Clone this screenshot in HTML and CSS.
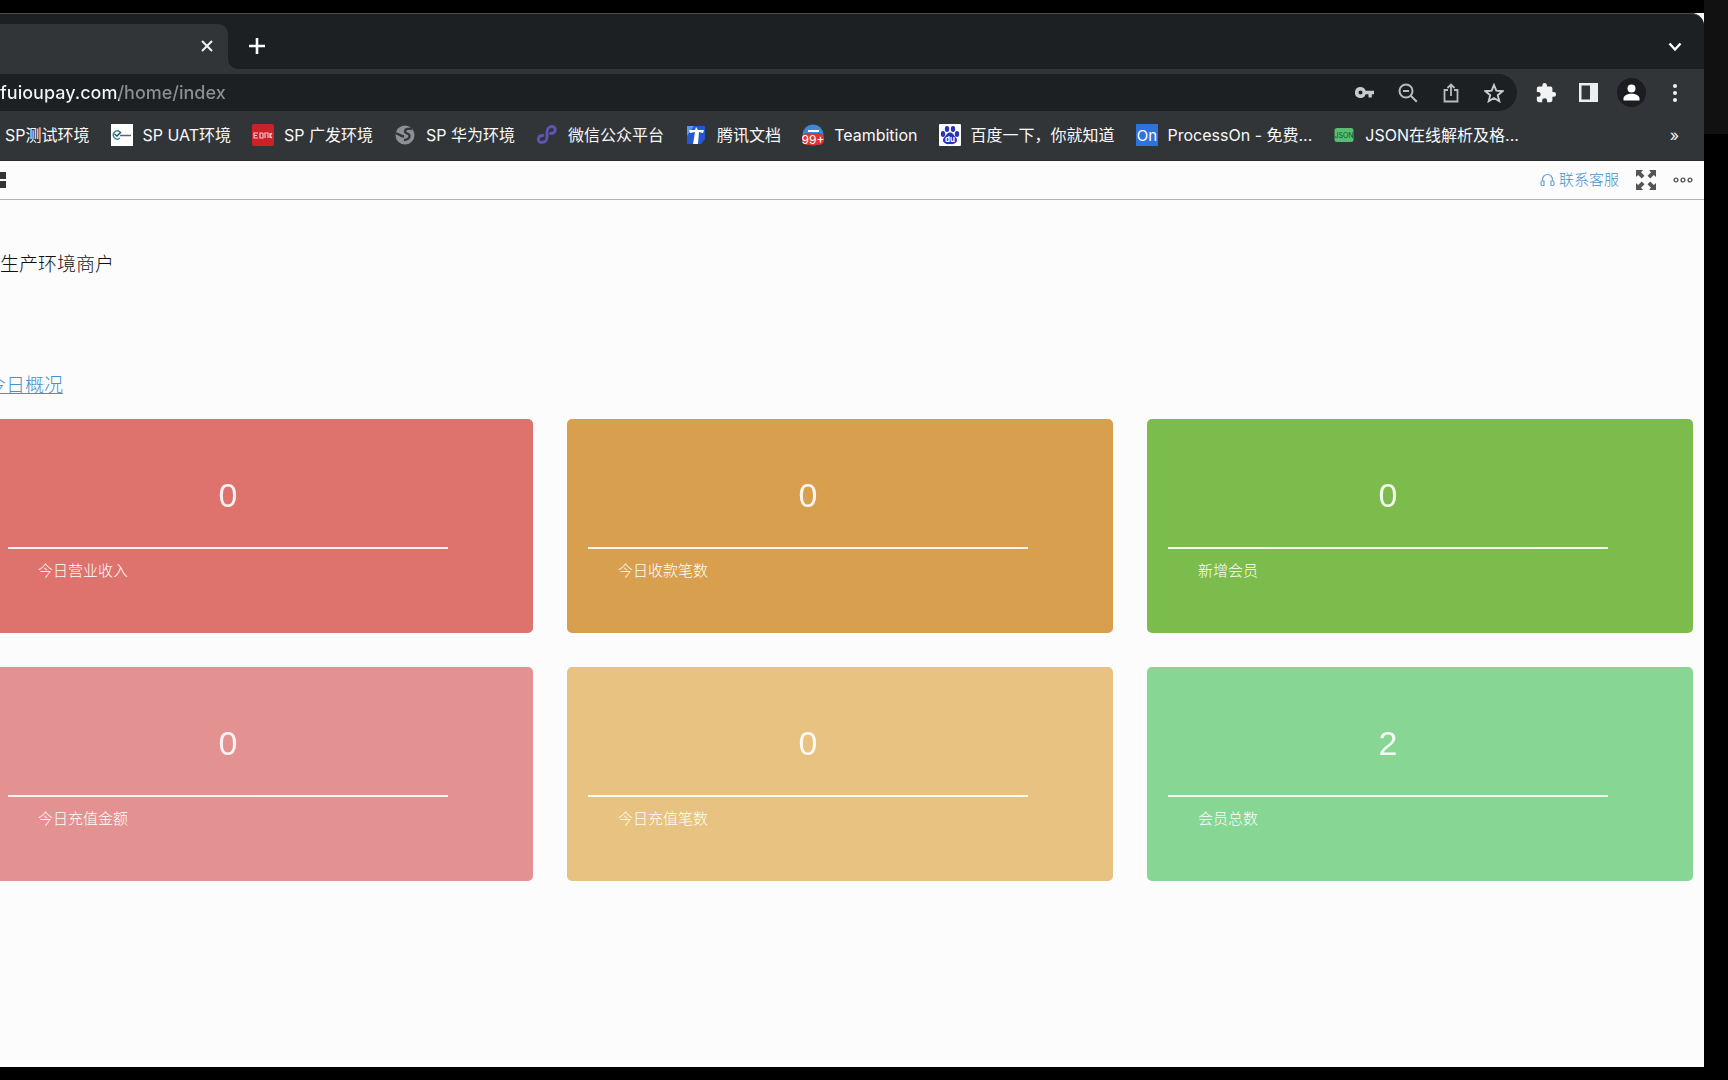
FILE: index.html
```html
<!DOCTYPE html>
<html lang="zh-CN">
<head>
<meta charset="utf-8">
<title>今日概况</title>
<link rel="stylesheet" href="styles.css">
</head>
<body>
<div class="screen">
  <header class="browser">
    <div class="tabstrip">
      <div class="tab">
        <button class="icon-btn tab-close" aria-label="关闭标签页"><svg width="12" height="12" viewBox="0 0 12 12"><path d="M1 1l10 10M11 1L1 11" stroke="#f1f3f4" stroke-width="2" fill="none"/></svg></button>
      </div>
      <svg class="tab-flare" width="10" height="10" viewBox="0 0 10 10"><path fill="#323538" d="M0 0v10h10A10 10 0 0 1 0 0z"/></svg>
      <button class="icon-btn new-tab" aria-label="新标签页"><svg width="16" height="16" viewBox="0 0 16 16"><path d="M8 0v16M0 8h16" stroke="#fff" stroke-width="2.600" fill="none"/></svg></button>
      <button class="icon-btn tab-search" aria-label="搜索标签页"><svg width="14" height="10" viewBox="0 0 14 10"><path d="M1.500 1.500L7 7.500l5.500-6" stroke="#fff" stroke-width="2.400" fill="none"/></svg></button>
    </div>
    <div class="toolbar">
      <div class="omnibox">
        <input class="url" type="text" aria-label="地址" value="fuioupay.com/home/index">
        <button class="icon-btn" aria-label="密码"><svg width="19" height="11" viewBox="0 0 19 11"><path fill="#c8cbce" fill-rule="evenodd" d="M5.500 0a5.500 5.500 0 1 0 5.200 7.200H13.500V10.500h3.300V7.200H19V3.800h-8.300A5.500 5.500 0 0 0 5.500 0zM5.500 3.500a2 2 0 1 1 0 4 2 2 0 0 1 0-4z"/></svg></button>
        <button class="icon-btn" aria-label="缩放"><svg width="20" height="20" viewBox="0 0 20 20"><g fill="none" stroke="#b9bcbf" stroke-width="2"><circle cx="8" cy="8" r="6.500"/><path d="M5 8h6M12.800 12.800l6 6"/></g></svg></button>
        <button class="icon-btn" aria-label="分享"><svg width="16" height="20" viewBox="0 0 16 20"><path d="M5 7H1.500v11.500h13V7H11M8 13V2M4.500 5L8 1.500 11.500 5" fill="none" stroke="#b9bcbf" stroke-width="1.800"/></svg></button>
        <button class="icon-btn" aria-label="收藏"><svg width="20" height="20" viewBox="0 0 20 20"><path d="M10 2l2.300 5.700 6.200.5-4.700 4 1.500 6L10 15l-5.300 3.200 1.500-6-4.700-4 6.200-.5z" fill="none" stroke="#c8cbce" stroke-width="1.900"/></svg></button>
      </div>
      <button class="icon-btn" aria-label="扩展程序"><svg width="22" height="22" viewBox="0 0 24 24"><path fill="#f1f3f4" d="M20.500 11H19V7a2 2 0 0 0-2-2h-4V3.500a2.500 2.500 0 0 0-5 0V5H4a2 2 0 0 0-2 2v3.800h1.500a2.700 2.700 0 0 1 0 5.400H2V20a2 2 0 0 0 2 2h3.800v-1.500a2.700 2.700 0 0 1 5.400 0V22H17a2 2 0 0 0 2-2v-4h1.500a2.500 2.500 0 0 0 0-5z"/></svg></button>
      <button class="icon-btn" aria-label="侧边栏"><svg width="19" height="19" viewBox="0 0 19 19"><path fill="#eceef0" fill-rule="evenodd" d="M0 0h19v19H0zM2.500 2.500v14H11v-14z"/></svg></button>
      <button class="icon-btn" aria-label="个人资料"><svg width="29" height="29" viewBox="0 0 29 29"><circle cx="14.500" cy="14.500" r="14.500" fill="#1b1d20"/><circle cx="14.500" cy="10.500" r="4" fill="#fff"/><path fill="#fff" d="M6.500 22.500v-2c0-3 4-4.700 8-4.700s8 1.700 8 4.700v2z"/></svg></button>
      <button class="icon-btn" aria-label="菜单"><svg width="4" height="18" viewBox="0 0 4 18"><g fill="#f1f3f4"><circle cx="2" cy="2" r="2"/><circle cx="2" cy="9" r="2"/><circle cx="2" cy="16" r="2"/></g></svg></button>
    </div>
    <nav class="bookmarks" aria-label="书签">
      <a class="bookmark" href="#">SP测试环境</a>
      <a class="bookmark" href="#"><svg class="fav" viewBox="0 0 22 22"><path fill="#fff" d="M0 0h22v22H0z"/><path d="M9 8a4 4 0 1 0 0 6" fill="none" stroke="#2b8a93" stroke-width="1.300"/><path d="M3.500 10l2.500 2 4-4" fill="none" stroke="#1d5560" stroke-width="1.500"/><path d="M9 11.500h11" stroke="#567" stroke-width="1.500"/></svg>SP UAT环境</a>
      <a class="bookmark" href="#"><svg class="fav" viewBox="0 0 22 22"><rect width="22" height="22" rx="2" fill="#cb2229"/><path d="M6 9H2v5h4M2 11.500h3M11 9H8v5h3V9M13 14V9h3v5M18 9v5M20 9l-2 3 2 2" fill="none" stroke="#f7c4c4" stroke-width="1.200"/></svg>SP 广发环境</a>
      <a class="bookmark" href="#"><svg class="fav" viewBox="0 0 22 22"><circle cx="11" cy="11" r="9.500" fill="#8d9094"/><path d="M18 5c-3-1-7 0-7 2.500s4 1 4.500 4-3 4.500-5.500 4.500M2 9.500c3 0 4 3 8 3" fill="none" stroke="#34373a" stroke-width="2.400"/></svg>SP 华为环境</a>
      <a class="bookmark" href="#"><svg class="fav" viewBox="0 0 22 22"><path d="M7 11.500c-6 0-6 7-1.500 7 3 0 5.500-2 5.500-5V8c0-3 2-5.500 5-5.500 4.500 0 4.500 7-1.500 7" fill="none" stroke="#5b57b8" stroke-width="2.800" stroke-linecap="round"/></svg>微信公众平台</a>
      <a class="bookmark" href="#"><svg class="fav" viewBox="0 0 22 22"><path fill="#2458d3" d="M2 2h18v13l-4 5H2z"/><path fill="#5f93f5" d="M2 2h7L2 12z"/><path fill="#fff" d="M4 6h6l1-3 2 3h6l-1 3-4-1-1 12H8l2-12-5 1z"/></svg>腾讯文档</a>
      <a class="bookmark" href="#"><svg class="fav" viewBox="0 0 22 22"><circle cx="11" cy="11" r="10.500" fill="#3f87d8"/><path fill="#fff" d="M6 6h11v2H6z"/><rect y="9" width="22" height="12" rx="5" fill="#d33a35"/><text x="11" y="19.500" text-anchor="middle" class="fav-badge">99+</text></svg>Teambition</a>
      <a class="bookmark" href="#"><svg class="fav" viewBox="0 0 22 22"><rect width="22" height="22" rx="1" fill="#fff"/><g fill="#2932b8"><ellipse cx="4" cy="10" rx="2.200" ry="3"/><ellipse cx="8" cy="5" rx="2.200" ry="3"/><ellipse cx="14" cy="5" rx="2.200" ry="3"/><ellipse cx="18" cy="10" rx="2.200" ry="3"/><path d="M11 8.500c3 0 3.500 2.500 5.500 4.500 4 4-.5 8-5.500 7-5 1-9.500-3-5.500-7 2-2 2.500-4.500 5.500-4.500z"/></g><text x="11" y="18" text-anchor="middle" class="fav-du">du</text></svg>百度一下，你就知道</a>
      <a class="bookmark" href="#"><svg class="fav" viewBox="0 0 22 22"><path fill="#2f72d9" d="M0 0h22v22H0z"/><text x="11" y="17" text-anchor="middle" class="fav-on">On</text></svg>ProcessOn - 免费...</a>
      <a class="bookmark" href="#"><svg class="fav" viewBox="0 0 22 22"><rect x="1.500" y="4" width="19" height="14" rx="2.500" fill="#58bd74"/><text x="11" y="13.500" text-anchor="middle" class="fav-json">JSON</text></svg>JSON在线解析及格...</a>
      <button class="icon-btn more" aria-label="更多书签">»</button>
    </nav>
  </header>
  <div class="app-bar">
    <button class="icon-btn menu-toggle" aria-label="菜单"><svg width="6" height="16" viewBox="0 0 6 16"><path fill="#333" d="M0 0h6v7H0zM0 9h6v7H0z"/></svg></button>
    <a class="support" href="#"><svg width="15" height="14" viewBox="0 0 15 14"><path d="M2.500 8V6.500a5 5 0 0 1 10 0V8M4 8H2.500a1.500 1.500 0 0 0-1.500 1.500v1.500a1.500 1.500 0 0 0 1.500 1.500H4zM11 8h1.500A1.500 1.500 0 0 1 14 9.500v1.500a1.500 1.500 0 0 1-1.500 1.500H11z" fill="none" stroke="#6aa3d4" stroke-width="1.200"/></svg>联系客服</a>
    <button class="icon-btn" aria-label="全屏"><svg width="20" height="20" viewBox="0 0 20 20"><g fill="#555"><path id="arrow" d="M0 0h7L5 2.200l3.500 3.500-2.800 2.800L2.200 5 0 7z"/><use href="#arrow" transform="rotate(90 10 10)"/><use href="#arrow" transform="rotate(180 10 10)"/><use href="#arrow" transform="rotate(270 10 10)"/></g></svg></button>
    <button class="icon-btn" aria-label="更多"><svg width="20" height="6" viewBox="0 0 20 6"><g fill="none" stroke="#555" stroke-width="1.400"><circle cx="3" cy="3" r="1.900"/><circle cx="10" cy="3" r="1.900"/><circle cx="17" cy="3" r="1.900"/></g></svg></button>
  </div>
  <main class="content">
    <h1 class="merchant">生产环境商户</h1>
    <a class="overview" href="#">今日概况</a>
    <div class="cards">
      <section class="card red"><p class="value">0</p><p class="label">今日营业收入</p></section>
      <section class="card orange"><p class="value">0</p><p class="label">今日收款笔数</p></section>
      <section class="card green"><p class="value">0</p><p class="label">新增会员</p></section>
      <section class="card pink"><p class="value">0</p><p class="label">今日充值金额</p></section>
      <section class="card sand"><p class="value">0</p><p class="label">今日充值笔数</p></section>
      <section class="card mint"><p class="value">2</p><p class="label">会员总数</p></section>
    </div>
  </main>
</div>
</body>
</html>
```
FILE: styles.css
```css
* { box-sizing: border-box; }

body {
  margin: 0;
  min-height: 100vh;
  padding: 13px 24px 13px 0;
  display: flex;
  flex-direction: column;
  background: linear-gradient(#111, #111) top right / 24px 134px no-repeat #000;
  font-family: "Liberation Sans", "Noto Sans CJK SC", sans-serif;
}

.screen {
  flex: 1;
  display: flex;
  flex-direction: column;
  overflow: hidden;
  background: #fcfcfc;
}

.icon-btn {
  flex: none;
  width: 43px;
  padding: 0;
  border: 0;
  background: none;
  display: flex;
  align-items: center;
  justify-content: center;
}

/* browser chrome */
.browser {
  border-radius: 0 13px 0 0;
  background: #323538;
  border-bottom: 1px solid #292b2d;
  font-family: Inter, "Noto Sans CJK SC", sans-serif;
}

.tabstrip {
  height: 56px;
  padding: 10px 8px 0 0;
  display: flex;
  background: #1d2023;
  border-top: 1px solid #4a4c4e;
  border-radius: 0 13px 0 0;
}

.tab {
  width: 228px;
  display: flex;
  justify-content: flex-end;
  background: #323538;
  border-radius: 0 10px 0 0;
}

.tab-flare { align-self: flex-end; }
.tab-close { padding-bottom: 1px; }
.new-tab { width: 38px; padding-bottom: 1px; }
.tab-search { margin-left: auto; }

.toolbar {
  padding: 5px 8px 0 0;
  display: flex;
}

.omnibox {
  flex: 1;
  height: 37px;
  margin-right: 7px;
  padding-right: 2px;
  display: flex;
  background: #1d2023;
  border-radius: 0 19px 19px 0;
}

.url {
  flex: 1;
  min-width: 0;
  padding: 0;
  border: 0;
  outline: 0;
  font: 500 18px/36px Inter, sans-serif;
  color: #fff;
  background: linear-gradient(90deg, #f4f5f6 119px, #8d9093 119px);
  -webkit-background-clip: text;
  background-clip: text;
  -webkit-text-fill-color: transparent;
}

.bookmarks {
  height: 49px;
  padding: 0 8px 2px 5px;
  display: flex;
  align-items: center;
  gap: 21px;
}

.bookmark {
  display: flex;
  align-items: center;
  gap: 10px;
  font-size: 16px;
  line-height: 24px;
  white-space: nowrap;
  color: #f8f9fa;
  text-decoration: none;
}

.fav { flex: none; width: 22px; height: 22px; }
.fav-badge { font: 12px Inter, sans-serif; fill: #fff; }
.fav-du { font: bold 8px Inter, sans-serif; fill: #fff; }
.fav-on { font: 15px Inter, sans-serif; fill: #fff; }
.fav-json { font: 7px Inter, sans-serif; fill: #14532a; }

.more {
  margin-left: auto;
  font: 16px Inter, sans-serif;
  color: #f1f3f4;
}

/* application header */
.app-bar {
  height: 39px;
  padding-right: 5px;
  display: flex;
  align-items: center;
  border-bottom: 1px solid #b4b4b4;
}

.menu-toggle { width: 6px; }

.support {
  margin-left: auto;
  margin-right: 5px;
  display: flex;
  align-items: center;
  gap: 4px;
  font-size: 15px;
  font-weight: 300;
  line-height: 22px;
  color: #4a90cb;
  text-decoration: none;
}

.app-bar .icon-btn:last-child { width: 32px; }

/* dashboard */
.content { padding: 51px 11px 48px 0; }

.merchant {
  margin: 0;
  font-size: 19px;
  font-weight: 300;
  line-height: 28px;
  color: #111;
}

.overview {
  display: inline-block;
  margin: 93px 0 19px -13px;
  font-size: 19px;
  font-weight: 300;
  line-height: 28px;
  color: #4a90cb;
}

.cards {
  margin-left: -13px;
  display: grid;
  grid-template-columns: repeat(3, 1fr);
  gap: 34px;
}

.card {
  height: 214px;
  padding: 56px 85px 0 21px;
  border-radius: 5px;
  color: #fff;
}

.red { background: #de726c; }
.orange { background: #d8a04e; }
.green { background: #7cbc4d; }
.pink { background: #e39291; }
.sand { background: #e7c281; }
.mint { background: #88d694; }

.value {
  margin: 0;
  padding-bottom: 32px;
  border-bottom: 2px solid #fff;
  font-size: 34px;
  line-height: 40px;
  text-align: center;
  opacity: .9;
}

.label {
  margin: 11px 30px 0;
  font-size: 15px;
  font-weight: 300;
  line-height: 22px;
}
```
